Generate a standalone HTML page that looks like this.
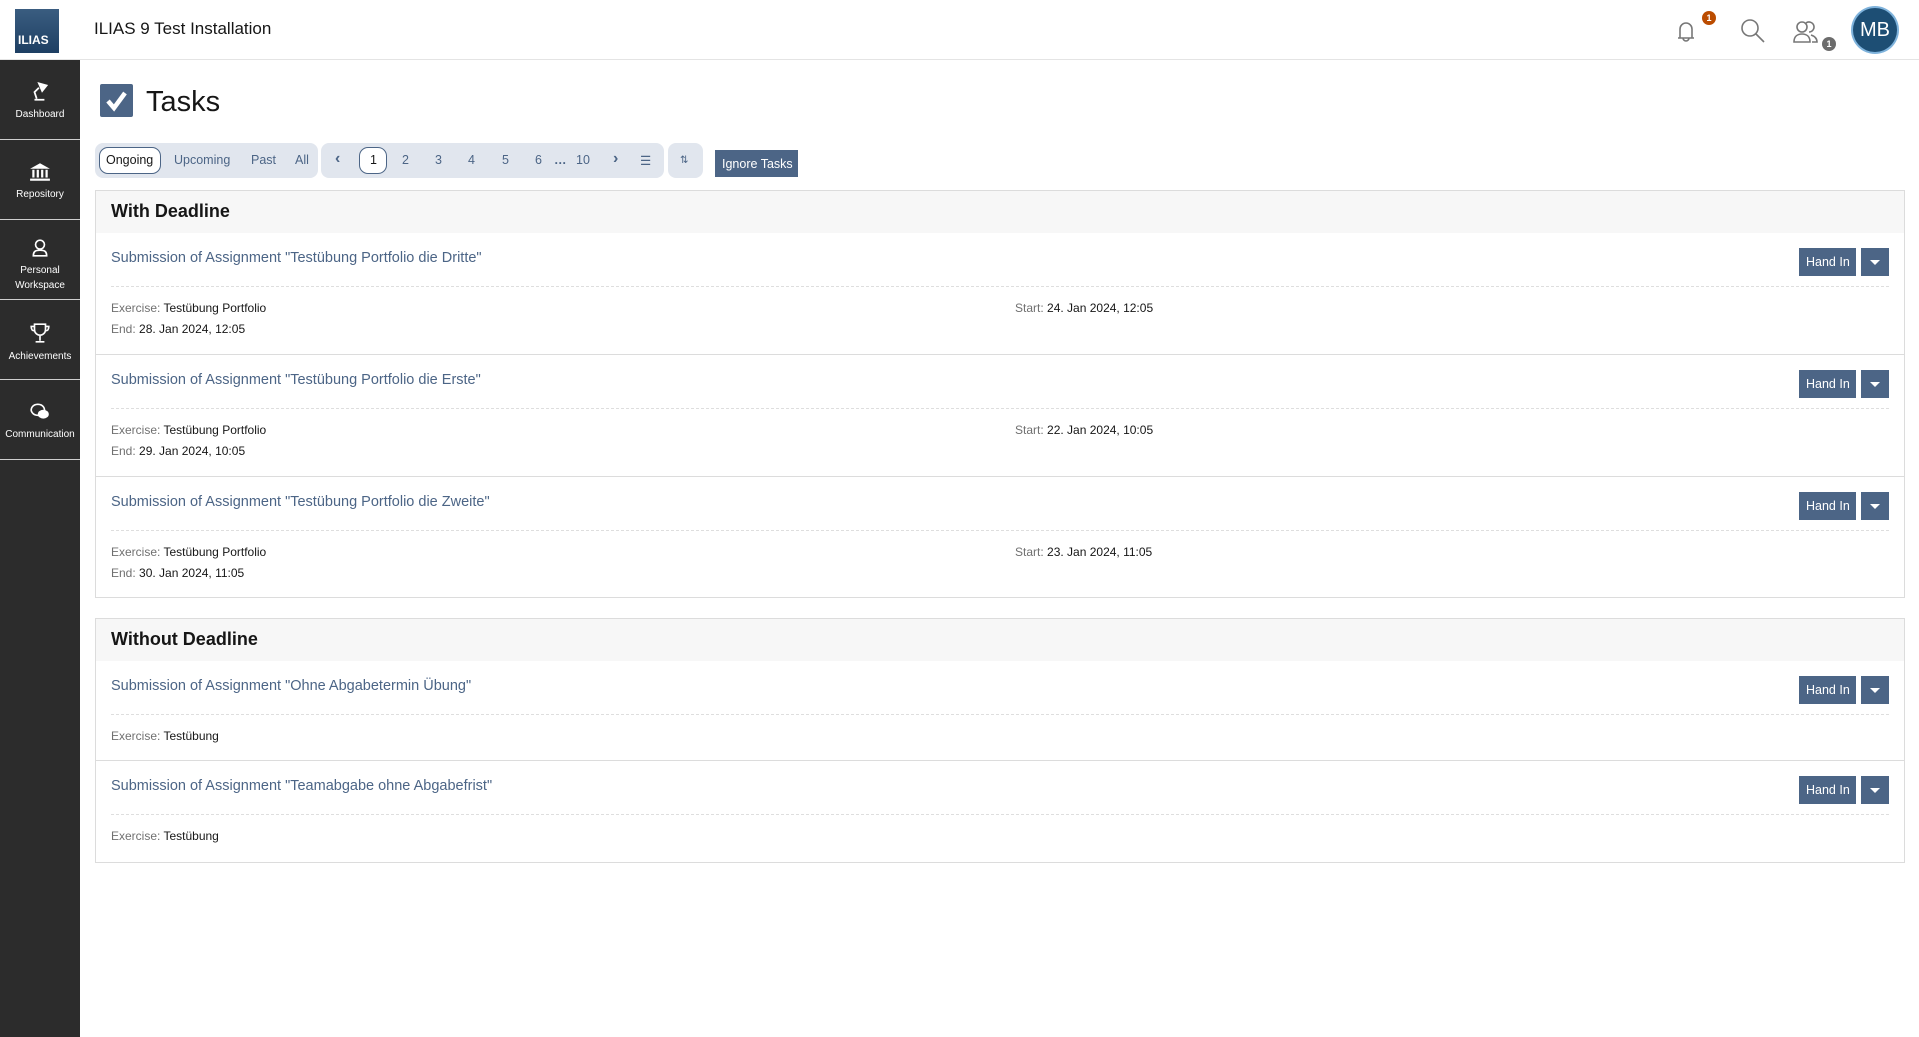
<!DOCTYPE html>
<html><head><meta charset="utf-8"><style>
*{box-sizing:border-box;margin:0;padding:0}
body{width:1919px;height:1037px;overflow:hidden;background:#fff;font-family:"Liberation Sans",sans-serif;color:#161616;position:relative}
.abs{position:absolute}
#hdr{left:0;top:0;width:1919px;height:60px;border-bottom:1px solid #e4e4e4;background:#fff}
#logo{left:15px;top:9px;width:44px;height:44px;background:linear-gradient(#3a5d80,#1e3f63);color:#fff;font-weight:bold;font-size:12px;padding:24px 0 0 3px}
#side{left:0;top:60px;width:80px;height:977px;background:#2c2c2c}
.si{position:absolute;left:0;width:80px;height:80px;border-bottom:1px solid #cfcfcf;color:#fff;font-size:10px;text-align:center;line-height:15px}
.si svg{display:block;margin:0 auto 5px}
.grp{position:absolute;top:143px;height:35px;background:#e1e6ee;border-radius:8px}
.t{position:absolute;font-size:12.5px;color:#4c6586;top:153px}
.pill{position:absolute;top:147px;height:27px;border:1px solid #4c6586;border-radius:9px;background:#fff}
.btn{background:#4c6586;color:#fff;font-size:12.5px}
.panel{position:absolute;left:95px;width:1810px;border:1px solid #dcdcdc}
.ph{height:42px;background:#f7f7f7;font-size:18px;font-weight:bold;padding:10px 0 0 15px}
.item{position:relative;height:122px;border-bottom:1px solid #dcdcdc}
.item:last-child{border-bottom:none}
.lk{position:absolute;left:15px;top:17px;color:#4c6586;font-size:14.5px}
.dash{position:absolute;left:15px;right:15px;top:53px;border-top:1px dashed #dedede}
.m{position:absolute;font-size:12px;color:#161616}
.m span{color:#707070}
.hi{position:absolute;right:48px;top:15px;width:57px;height:28px;padding:7px 0 0 7px}
.cr{position:absolute;right:15px;top:15px;width:28px;height:28px}
.cr:after{content:"";position:absolute;left:9px;top:12px;border:5px solid transparent;border-top:5px solid #fff;border-bottom:0}
</style></head><body>
<div id="hdr" class="abs"></div>
<div id="logo" class="abs">ILIAS</div>
<div class="abs" style="left:94px;top:19px;font-size:17px">ILIAS 9 Test Installation</div>
<svg class="abs" style="left:1672px;top:17px" width="28" height="28" viewBox="0 0 28 28" fill="none" stroke="#777" stroke-width="1.6"><path d="M6 21h16M8 21v-9a6 6 0 0 1 12 0v9M11 21a3 3 0 0 0 6 0"/></svg>
<div class="abs" style="left:1702px;top:11px;width:14px;height:14px;border-radius:7px;background:#bb4c00;color:#fff;font-size:9px;font-weight:bold;text-align:center;line-height:14px">1</div>
<svg class="abs" style="left:1738px;top:16px" width="30" height="30" viewBox="0 0 30 30" fill="none" stroke="#777" stroke-width="1.6"><circle cx="12" cy="12" r="8"/><path d="M18 18l8 8"/></svg>
<svg class="abs" style="left:1792px;top:18px" width="28" height="28" viewBox="0 0 28 28" fill="none" stroke="#777" stroke-width="1.6"><circle cx="10" cy="9" r="5"/><path d="M2 24c0-6 4-8 8-8s8 2 8 8zM14 5a5 5 0 1 1 3 9M19 17c3 1 6 3 6 7h-5"/></svg>
<div class="abs" style="left:1822px;top:37px;width:14px;height:14px;border-radius:7px;background:#6c6c6c;color:#fff;font-size:9px;font-weight:bold;text-align:center;line-height:14px">1</div>
<div class="abs" style="left:1853px;top:8px;width:44px;height:44px;border-radius:22px;background:#1d4e74;box-shadow:0 0 0 2px #7fb3dc;color:#fff;font-size:20px;text-align:center;line-height:44px">MB</div>

<div id="side" class="abs">
<div class="si" style="top:0;padding-top:20px"><svg width="20" height="22" viewBox="0 0 18 20" fill="none" stroke="#fff" stroke-width="1.6"><path d="M4 18h9M6 17l-2-6 4-4"/><path d="M8 3l7 2-4 5z" fill="#fff"/></svg>Dashboard</div>
<div class="si" style="top:80px;padding-top:22px"><svg width="22" height="20" viewBox="0 0 20 18" fill="#fff"><path d="M10 1l9 5H1zM3 7h2v7H3zM7 7h2v7H7zM11 7h2v7h-2zM15 7h2v7h-2zM1 15h18v2H1z"/></svg>Repository</div>
<div class="si" style="top:160px;padding-top:18px"><svg width="18" height="20" viewBox="0 0 16 18" fill="none" stroke="#fff" stroke-width="1.5"><circle cx="8" cy="6" r="4"/><path d="M2 16c0-4 2-5 6-5s6 1 6 5z"/></svg>Personal<br>Workspace</div>
<div class="si" style="top:240px;padding-top:22px"><svg width="20" height="22" viewBox="0 0 18 20" fill="none" stroke="#fff" stroke-width="1.5"><path d="M4 2h10v5a5 5 0 0 1-10 0zM4 4H1c0 3 1 4 3 4M14 4h3c0 3-1 4-3 4M9 12v5M5 18h8"/></svg>Achievements</div>
<div class="si" style="top:320px;padding-top:22px"><svg width="22" height="20" viewBox="0 0 20 18"><path d="M8 2a6 5 0 1 0 0.1 0z" fill="none" stroke="#fff" stroke-width="1.5"/><ellipse cx="13" cy="11" rx="5" ry="4" fill="#fff"/></svg>Communication</div>
</div>

<div class="abs" style="left:100px;top:84px;width:33px;height:33px;background:#4c6586;border-radius:2px"></div>
<svg class="abs" style="left:100px;top:84px" width="33" height="33" viewBox="0 0 33 33" fill="none" stroke="#fff" stroke-width="4.5"><path d="M8 17l6 7 11-15"/></svg>
<div class="abs" style="left:146px;top:86px;font-size:29px">Tasks</div>

<div class="grp" style="left:95px;width:223px"></div>
<div class="grp" style="left:321px;width:343px"></div>
<div class="grp" style="left:668px;width:35px"></div>
<div class="pill" style="left:99px;width:62px"></div>
<div class="pill" style="left:359px;width:28px"></div>
<div class="t" style="left:106px;color:#161616">Ongoing</div>
<div class="t" style="left:174px">Upcoming</div>
<div class="t" style="left:251px">Past</div>
<div class="t" style="left:295px">All</div>
<div class="t" style="left:335px;font-weight:bold;font-size:16px;top:150px">‹</div>
<div class="t" style="left:370px;color:#161616">1</div>
<div class="t" style="left:402px">2</div>
<div class="t" style="left:435px">3</div>
<div class="t" style="left:468px">4</div>
<div class="t" style="left:502px">5</div>
<div class="t" style="left:535px">6</div>
<div class="t" style="left:554px;font-weight:bold">…</div>
<div class="t" style="left:576px">10</div>
<div class="t" style="left:613px;font-weight:bold;font-size:16px;top:150px">›</div>
<div class="t" style="left:640px">☰</div>
<div class="t" style="left:680px;font-size:10px;top:155px">⇅</div>
<div class="abs btn" style="left:715px;top:150px;width:83px;height:27px;padding:7px 0 0 7px">Ignore Tasks</div>

<div class="panel" style="top:190px;height:408px">
<div class="ph">With Deadline</div>
<div class="item"><div class="lk">Submission of Assignment "Testübung Portfolio die Dritte"</div><div class="dash"></div>
<div class="m" style="left:15px;top:68px"><span>Exercise:</span> Testübung Portfolio</div>
<div class="m" style="left:15px;top:89px"><span>End:</span> 28. Jan 2024, 12:05</div>
<div class="m" style="left:919px;top:68px"><span>Start:</span> 24. Jan 2024, 12:05</div>
<div class="hi btn">Hand In</div><div class="cr btn"></div></div>
<div class="item"><div class="lk">Submission of Assignment "Testübung Portfolio die Erste"</div><div class="dash"></div>
<div class="m" style="left:15px;top:68px"><span>Exercise:</span> Testübung Portfolio</div>
<div class="m" style="left:15px;top:89px"><span>End:</span> 29. Jan 2024, 10:05</div>
<div class="m" style="left:919px;top:68px"><span>Start:</span> 22. Jan 2024, 10:05</div>
<div class="hi btn">Hand In</div><div class="cr btn"></div></div>
<div class="item"><div class="lk">Submission of Assignment "Testübung Portfolio die Zweite"</div><div class="dash"></div>
<div class="m" style="left:15px;top:68px"><span>Exercise:</span> Testübung Portfolio</div>
<div class="m" style="left:15px;top:89px"><span>End:</span> 30. Jan 2024, 11:05</div>
<div class="m" style="left:919px;top:68px"><span>Start:</span> 23. Jan 2024, 11:05</div>
<div class="hi btn">Hand In</div><div class="cr btn"></div></div>
</div>

<div class="panel" style="top:618px;height:245px">
<div class="ph">Without Deadline</div>
<div class="item" style="height:100px"><div class="lk">Submission of Assignment "Ohne Abgabetermin Übung"</div><div class="dash"></div>
<div class="m" style="left:15px;top:68px"><span>Exercise:</span> Testübung</div>
<div class="hi btn">Hand In</div><div class="cr btn"></div></div>
<div class="item" style="height:100px"><div class="lk">Submission of Assignment "Teamabgabe ohne Abgabefrist"</div><div class="dash"></div>
<div class="m" style="left:15px;top:68px"><span>Exercise:</span> Testübung</div>
<div class="hi btn">Hand In</div><div class="cr btn"></div></div>
</div>
</body></html>
